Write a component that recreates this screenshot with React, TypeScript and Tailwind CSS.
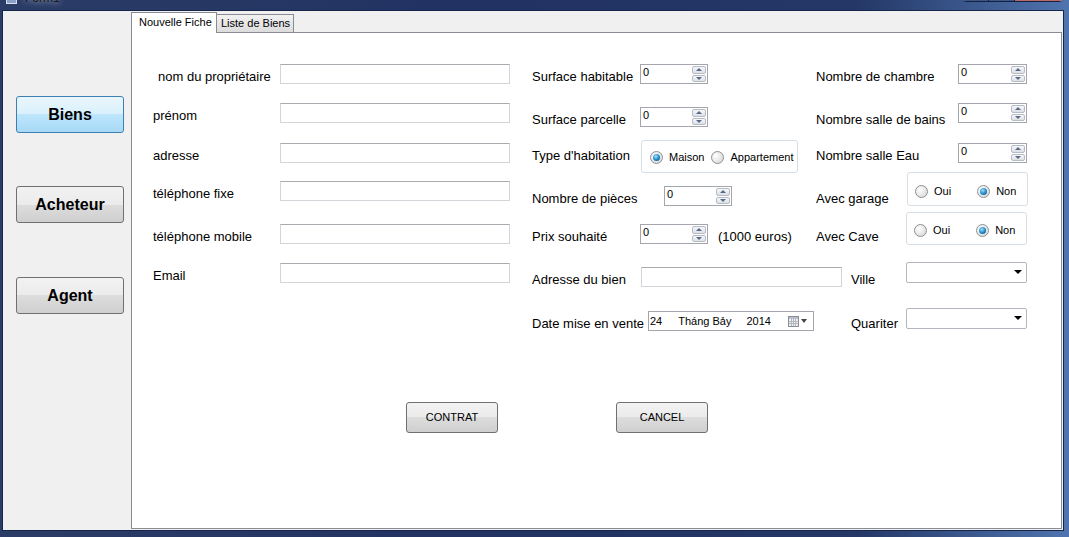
import React from 'react';

type Cls = { className?: string };

function Label({ children, className = '' }: { children: React.ReactNode; className?: string }) {
  return (
    <span className={'mt-[4px] shrink-0 whitespace-nowrap text-[13px] leading-[15px] text-black ' + className}>
      {children}
    </span>
  );
}

function TextBox({ className = '' }: Cls) {
  return <div className={'h-[20px] shrink-0 border border-[#d3d5da] border-t-[#a9abb0] bg-white ' + className} />;
}

function SpinButton({ up }: { up?: boolean }) {
  return (
    <span className="flex flex-1 items-center justify-center rounded-[2px] border border-[#b6bcc6] bg-[linear-gradient(#f7f7f7,#dde0e4)]">
      {up ? (
        <span className="h-0 w-0 border-x-[3px] border-b-[3px] border-x-transparent border-b-[#56698f]" />
      ) : (
        <span className="h-0 w-0 border-x-[3px] border-t-[3px] border-x-transparent border-t-[#56698f]" />
      )}
    </span>
  );
}

function Spinner({ className = '' }: Cls) {
  return (
    <div className={'flex h-[20px] shrink-0 border border-[#a3a6ad] bg-white ' + className}>
      <span className="flex-1 pl-[2px] pt-[1px] text-[11px] leading-[12px] text-black">0</span>
      <div className="flex w-[15px] flex-col gap-px py-px pr-px">
        <SpinButton up />
        <SpinButton />
      </div>
    </div>
  );
}

function Radio({ checked, label, className = '' }: { checked?: boolean; label: string; className?: string }) {
  return (
    <span className={'flex items-center gap-[6px] text-[11px] leading-[13px] text-black ' + className}>
      <span className="flex h-[13px] w-[13px] items-center justify-center rounded-full border border-[#8e9092] bg-[radial-gradient(circle_at_35%_35%,#ffffff,#d2d2d2)]">
        {checked && (
          <span className="h-[7px] w-[7px] rounded-full bg-[radial-gradient(circle_at_40%_35%,#9be3ff,#1d86c4_55%,#0c4a74)]" />
        )}
      </span>
      {label}
    </span>
  );
}

function Combo({ className = '' }: Cls) {
  return (
    <div className={'flex h-[21px] w-[121px] shrink-0 items-center justify-end rounded-[2px] border border-[#b3b6bc] bg-white pr-[4px] ' + className}>
      <span className="h-0 w-0 border-x-[4px] border-t-[4px] border-x-transparent border-t-black" />
    </div>
  );
}

function DatePicker() {
  return (
    <div className="flex h-[20px] w-[166px] shrink-0 items-center border border-[#a3a6ad] bg-white text-[11px] leading-[13px] text-black">
      <span className="ml-[1px]">24</span>
      <span className="ml-[16px]">Tháng Bảy</span>
      <span className="ml-[15px]">2014</span>
      <svg className="ml-auto" width="11" height="11" viewBox="0 0 11 11">
        <rect x="0.5" y="0.5" width="10" height="10" fill="#eef0f3" stroke="#8a8d93" />
        <rect x="1" y="1" width="9" height="2" fill="#b9c0cc" />
        <path d="M1 5.5h9M1 7.5h9M3.5 3v7M5.5 3v7M7.5 3v7" stroke="#b3b7be" strokeWidth="1" />
      </svg>
      <span className="ml-[2px] mr-[6px] h-0 w-0 border-x-[3px] border-t-[4px] border-x-transparent border-t-[#444]" />
    </div>
  );
}

function SideButton({ children, active }: { children: React.ReactNode; active?: boolean }) {
  return (
    <div
      className={
        active
          ? 'flex h-[37px] w-[108px] items-center justify-center rounded-[3px] border border-[#3c7fb1] bg-[linear-gradient(#eaf6fd_0%,#d9f0fc_50%,#bee6fd_50%,#a7d9f5_100%)] text-[16px] font-bold text-black'
          : 'flex h-[37px] w-[108px] items-center justify-center rounded-[3px] border border-[#707070] bg-[linear-gradient(#f2f2f2_0%,#ebebeb_50%,#dddddd_50%,#cfcfcf_100%)] text-[16px] font-bold text-black'
      }
    >
      {children}
    </div>
  );
}

function PushButton({ children }: { children: React.ReactNode }) {
  return (
    <div className="flex h-[31px] w-[92px] items-center justify-center rounded-[3px] border border-[#707070] bg-[linear-gradient(#f2f2f2_0%,#ebebeb_50%,#dddddd_50%,#cfcfcf_100%)] text-[11px] text-black">
      {children}
    </div>
  );
}

export default function App() {
  return (
    <div className="flex h-[537px] w-[1069px] flex-col overflow-hidden bg-[linear-gradient(90deg,#2b3c66_0%,#213263_45%,#243766_80%,#4f74ae_100%)] font-['Liberation_Sans',Arial,sans-serif]">
      {/* title bar, mostly cut off */}
      <div className="flex h-[10px] shrink-0 overflow-hidden">
        <div className="ml-[6px] -mt-[5px] h-[9px] w-[11px] border border-[#d8e0ee] bg-[#8aa2c8]" />
        <span className="ml-[8px] -mt-[9px] text-[12px] leading-[15px] text-[#1a1a1a] [text-shadow:0_0_6px_#dfe7f5]">Form1</span>
        <div className="ml-auto mr-[6px] -mt-[12px] flex h-[14px] w-[101px] rounded-b-[4px] border border-[#15223f]">
          <div className="w-[26px] border-r border-[#15223f] bg-[#3c5688]" />
          <div className="w-[26px] border-r border-[#15223f] bg-[#3c5688]" />
          <div className="flex-1 bg-[#b86a6a]" />
        </div>
      </div>

      <div className="flex flex-1 px-[2px] pr-[5px] pb-[6px]">
        <div className="flex flex-1 border border-[#16264a] bg-[#f0f0f0] pr-px">
          {/* left navigation */}
          <div className="flex w-[128px] shrink-0 flex-col pl-[13px] pt-[85px]">
            <SideButton active>Biens</SideButton>
            <div className="mt-[53px]">
              <SideButton>Acheteur</SideButton>
            </div>
            <div className="mt-[54px]">
              <SideButton>Agent</SideButton>
            </div>
          </div>

          {/* tab control */}
          <div className="flex flex-1 flex-col pb-px">
            <div className="flex h-[21px] shrink-0 items-end">
              <div className="relative z-10 -mb-px flex h-[21px] w-[86px] items-start border border-b-0 border-[#898c95] bg-white pl-[7px] pt-[3px] text-[11px] leading-[13px] text-black">
                Nouvelle Fiche
              </div>
              <div className="flex h-[18px] w-[77px] items-center border border-b-0 border-l-0 border-[#898c95] bg-[linear-gradient(#f2f2f2,#dcdcdc)] pl-[4px] text-[11px] leading-[13px] text-black">
                Liste de Biens
              </div>
            </div>

            <div className="flex flex-1 flex-col border border-[#898c95] bg-white pl-[21px] pt-[31px]">
              <div className="flex items-start">
                {/* owner column */}
                <div className="flex w-[358px] shrink-0 flex-col">
                  <div className="flex h-[20px] items-center">
                    <Label className="w-[127px] pl-[5px]">nom du propriétaire</Label>
                    <TextBox className="w-[230px]" />
                  </div>
                  <div className="mt-[19px] flex h-[20px] items-center">
                    <Label className="w-[127px]">prénom</Label>
                    <TextBox className="w-[230px]" />
                  </div>
                  <div className="mt-[20px] flex h-[20px] items-center">
                    <Label className="w-[127px]">adresse</Label>
                    <TextBox className="w-[230px]" />
                  </div>
                  <div className="mt-[18px] flex h-[20px] items-center">
                    <Label className="w-[127px]">téléphone fixe</Label>
                    <TextBox className="w-[230px]" />
                  </div>
                  <div className="mt-[23px] flex h-[20px] items-center">
                    <Label className="w-[127px]">téléphone mobile</Label>
                    <TextBox className="w-[230px]" />
                  </div>
                  <div className="mt-[19px] flex h-[20px] items-center">
                    <Label className="w-[127px]">Email</Label>
                    <TextBox className="w-[230px]" />
                  </div>
                </div>

                {/* property block */}
                <div className="ml-[21px] flex flex-col">
                  <div className="flex h-[20px] items-center">
                    <div className="flex h-[20px] w-[284px] shrink-0 items-center">
                      <Label className="w-[108px]">Surface habitable</Label>
                      <Spinner className="w-[68px]" />
                    </div>
                    <Label className="w-[142px]">Nombre de chambre</Label>
                    <Spinner className="w-[69px]" />
                  </div>

                  <div className="mt-[23px] flex h-[20px] items-center">
                    <div className="flex h-[20px] w-[284px] shrink-0 items-center">
                      <Label className="w-[108px]">Surface parcelle</Label>
                      <Spinner className="w-[68px]" />
                    </div>
                    <Label className="w-[142px]">Nombre salle de bains</Label>
                    <Spinner className="-mt-[8px] w-[69px]" />
                  </div>

                  <div className="mt-[16px] flex h-[20px] items-center">
                    <div className="flex h-[20px] w-[284px] shrink-0 items-center">
                      <Label className="w-[109px]">Type d'habitation</Label>
                      <div className="mt-[6px] flex h-[33px] w-[157px] shrink-0 items-center rounded-[3px] border border-[#d5dfe5] pl-[8px] pt-[3px]">
                        <Radio checked label="Maison" />
                        <Radio label="Appartement" className="ml-[7px]" />
                      </div>
                    </div>
                    <Label className="w-[142px]">Nombre salle Eau</Label>
                    <Spinner className="w-[69px]" />
                  </div>

                  <div className="mt-[23px] flex h-[20px] items-center">
                    <div className="flex h-[20px] w-[284px] shrink-0 items-center">
                      <Label className="w-[132px]">Nombre de pièces</Label>
                      <Spinner className="w-[68px]" />
                    </div>
                    <Label className="w-[91px]">Avec garage</Label>
                    <div className="-mt-[14px] flex h-[34px] w-[121px] shrink-0 items-center rounded-[3px] border border-[#d5dfe5] pl-[7px] pt-[4px]">
                      <Radio label="Oui" />
                      <Radio checked label="Non" className="ml-[26px]" />
                    </div>
                  </div>

                  <div className="mt-[18px] flex h-[20px] items-center">
                    <div className="flex h-[20px] w-[284px] shrink-0 items-center">
                      <Label className="w-[108px]">Prix souhaité</Label>
                      <Spinner className="w-[68px]" />
                      <Label className="ml-[10px]">(1000 euros)</Label>
                    </div>
                    <Label className="w-[90px]">Avec Cave</Label>
                    <div className="-mt-[12px] flex h-[33px] w-[121px] shrink-0 items-center rounded-[3px] border border-[#d5dfe5] pl-[7px] pt-[4px]">
                      <Radio label="Oui" />
                      <Radio checked label="Non" className="ml-[26px]" />
                    </div>
                  </div>

                  <div className="mt-[23px] flex h-[20px] items-center">
                    <Label className="w-[109px]">Adresse du bien</Label>
                    <TextBox className="w-[201px]" />
                    <Label className="ml-[9px] w-[55px]">Ville</Label>
                    <Combo className="-mt-[10px]" />
                  </div>

                  <div className="mt-[24px] flex h-[20px] items-center">
                    <Label className="w-[116px]">Date mise en vente</Label>
                    <DatePicker />
                    <Label className="ml-[37px] w-[55px]">Quariter</Label>
                    <Combo className="-mt-[6px]" />
                  </div>
                </div>
              </div>

              {/* actions */}
              <div className="mt-[71px] flex pl-[253px]">
                <PushButton>CONTRAT</PushButton>
                <div className="ml-[118px]">
                  <PushButton>CANCEL</PushButton>
                </div>
              </div>
            </div>
          </div>
        </div>
      </div>
    </div>
  );
}
